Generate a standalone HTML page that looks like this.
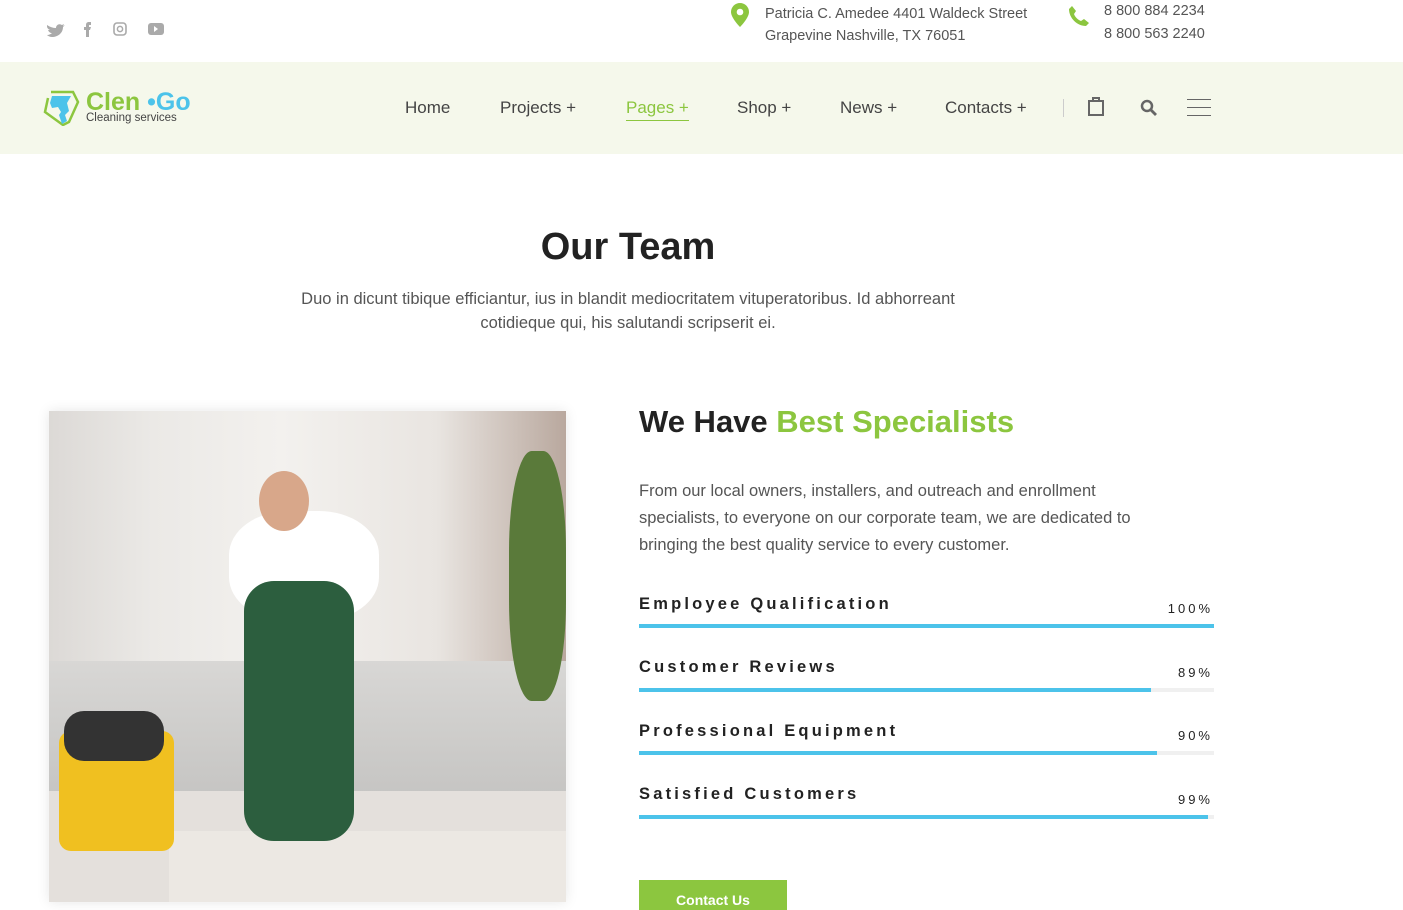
<!DOCTYPE html>
<html><head><meta charset="utf-8"><style>
*{margin:0;padding:0;box-sizing:border-box}
body{width:1403px;height:902px;overflow:hidden;background:#fff;font-family:"Liberation Sans",sans-serif;color:#555;position:relative}
.a{position:absolute}
.top{font-size:14.5px;color:#555;line-height:22px}
.nav{top:62px;left:0;width:1403px;height:92px;background:#f5f8eb}
.nav span{position:absolute;top:36px;font-size:17px;color:#444}
.bar{position:absolute;left:639px;width:575px;height:4px;background:#f0f0f0}
.bar i{display:block;height:4px;background:#4cc3ea}
.lbl{position:absolute;left:639px;font-size:16.5px;font-weight:bold;letter-spacing:3.2px;color:#222}
.pct{position:absolute;right:190px;font-size:13px;letter-spacing:3px;color:#222}
</style></head><body>
<svg class="a" style="left:46px;top:21px" width="130" height="16" viewBox="0 0 130 16">
<path d="M1 4c3 2 6 3 9 3 0-3 3-5 6-3l2-1-1 2 2-1-2 2c0 6-5 10-11 10-2 0-4-1-5-2 2 0 4-1 5-2-2 0-3-1-4-3h2c-2-1-3-2-3-4h2C1 8 1 6 1 4z" fill="#aaa"/>
<path d="M40 16V9h-2V6h2V4c0-2 1-3 3-3h2v3h-1c-1 0-1 0-1 1v1h2l-1 3h-1v7z" fill="#aaa"/>
<rect x="68" y="2" width="12" height="12" rx="3" fill="none" stroke="#aaa" stroke-width="1.6"/><circle cx="74" cy="8" r="2.6" fill="none" stroke="#aaa" stroke-width="1.5"/>
<rect x="102" y="2" width="16" height="12" rx="3" fill="#aaa"/><path d="M108 5v6l4-3z" fill="#fff"/>
</svg>
<svg class="a" style="left:731px;top:3px" width="18" height="24" viewBox="0 0 18 24"><path d="M9 0C4 0 0 4 0 9c0 6 9 15 9 15s9-9 9-15c0-5-4-9-9-9z" fill="#8cc63f"/><circle cx="9" cy="9" r="3.3" fill="#fff"/></svg>
<div class="a top" style="left:765px;top:3px">Patricia C. Amedee 4401 Waldeck Street<br>Grapevine Nashville, TX 76051</div>
<svg class="a" style="left:1068px;top:5px" width="22" height="22" viewBox="0 0 22 22"><path d="M4 1l4 5-2 3c1 3 4 6 7 7l3-2 5 4-3 3C9 21 1 13 1 4z" fill="#8cc63f"/></svg>
<div class="a top" style="left:1104px;top:0px;line-height:23px">8 800 884 2234<br>8 800 563 2240</div>
<div class="a nav">
<svg class="a" style="left:43px;top:28px" width="37" height="36" viewBox="0 0 37 36"><path d="M8 2h22l5 10-9 20-6 3L2 22 5 8" fill="none" stroke="#8cc63f" stroke-width="2.5"/><path d="M9 6h19l-4 7 2 8-4 4 2 6-5 3-3-9 2-3-3-5-6 1-2-5z" fill="#4cc3ea"/></svg>
<div class="a" style="left:86px;top:26px;font-size:25px;font-weight:bold;color:#8cc63f;letter-spacing:0px">Clen<span style="position:static;color:#4cc3ea;font-size:25px;font-weight:bold"> •Go</span></div>
<div class="a" style="left:86px;top:50px;font-size:11.5px;color:#444">Cleaning services</div>
<span style="left:405px">Home</span>
<span style="left:500px">Projects +</span>
<span style="left:626px;color:#8cc63f;border-bottom:1px solid #8cc63f;padding-bottom:2px">Pages +</span>
<span style="left:737px">Shop +</span>
<span style="left:840px">News +</span>
<span style="left:945px">Contacts +</span>
<div class="a" style="left:1063px;top:37px;width:1px;height:18px;background:#ccc"></div>
<svg class="a" style="left:1087px;top:33px" width="18" height="22" viewBox="0 0 18 22"><rect x="2" y="6" width="14" height="14" fill="none" stroke="#666" stroke-width="2"/><path d="M6 6V3h6v3" fill="none" stroke="#666" stroke-width="2"/></svg>
<svg class="a" style="left:1139px;top:36px" width="20" height="20" viewBox="0 0 20 20"><circle cx="8" cy="8" r="5" fill="none" stroke="#666" stroke-width="2.5"/><path d="M12 12l5 5" stroke="#666" stroke-width="2.8"/></svg>
<div class="a" style="left:1187px;top:37px;width:24px;height:1px;background:#666;box-shadow:0 8px 0 #666,0 16px 0 #666"></div>
</div>
<div class="a" style="left:0;width:1256px;top:226px;text-align:center;font-size:38px;font-weight:bold;color:#222">Our Team</div>
<div class="a" style="left:258px;width:740px;top:287px;text-align:center;font-size:16.5px;line-height:24px;color:#555">Duo in dicunt tibique efficiantur, ius in blandit mediocritatem vituperatoribus. Id abhorreant<br>cotidieque qui, his salutandi scripserit ei.</div>
<div class="a" style="left:49px;top:411px;width:517px;height:491px;background:linear-gradient(90deg,#dcd9d6 0%,#ebe9e6 20%,#f3f1ee 45%,#e9e5e1 75%,#b9a89e 100%);box-shadow:0 0 12px rgba(0,0,0,.1);overflow:hidden">
<div class="a" style="left:0;top:250px;width:517px;height:140px;background:linear-gradient(180deg,#d8d7d5,#c5c4c2)"></div>
<div class="a" style="left:0;top:380px;width:517px;height:111px;background:#e4e0dc"></div>
<div class="a" style="left:120px;top:420px;width:397px;height:71px;background:#ece8e3"></div>
<div class="a" style="left:460px;top:40px;width:57px;height:250px;background:#5a7a3a;border-radius:40%"></div>
<div class="a" style="left:180px;top:100px;width:150px;height:110px;background:#fff;border-radius:40%"></div>
<div class="a" style="left:195px;top:170px;width:110px;height:260px;background:#2c5e3e;border-radius:30px"></div>
<div class="a" style="left:210px;top:60px;width:50px;height:60px;background:#d8a78a;border-radius:50%"></div>
<div class="a" style="left:10px;top:320px;width:115px;height:120px;background:#f0c020;border-radius:12px"></div>
<div class="a" style="left:15px;top:300px;width:100px;height:50px;background:#333;border-radius:20px"></div>
</div>
<div class="a" style="left:639px;top:404px;font-size:31px;font-weight:bold;color:#222">We Have <span style="color:#8cc63f">Best Specialists</span></div>
<div class="a" style="left:639px;top:478px;width:560px;font-size:16.5px;line-height:27px;color:#555">From our local owners, installers, and outreach and enrollment<br>specialists, to everyone on our corporate team, we are dedicated to<br>bringing the best quality service to every customer.</div>
<div class="lbl" style="top:595px">Employee Qualification</div><div class="pct" style="top:601px">100%</div>
<div class="bar" style="top:624px"><i style="width:100%"></i></div>
<div class="lbl" style="top:658px">Customer Reviews</div><div class="pct" style="top:665px">89%</div>
<div class="bar" style="top:688px"><i style="width:89%"></i></div>
<div class="lbl" style="top:722px">Professional Equipment</div><div class="pct" style="top:728px">90%</div>
<div class="bar" style="top:751px"><i style="width:90%"></i></div>
<div class="lbl" style="top:785px">Satisfied Customers</div><div class="pct" style="top:792px">99%</div>
<div class="bar" style="top:815px"><i style="width:99%"></i></div>
<div class="a" style="left:639px;top:880px;width:148px;height:30px;background:#8cc63f;color:#fff;font-size:14px;font-weight:bold;text-align:center;padding-top:12px">Contact Us</div>
</body></html>
